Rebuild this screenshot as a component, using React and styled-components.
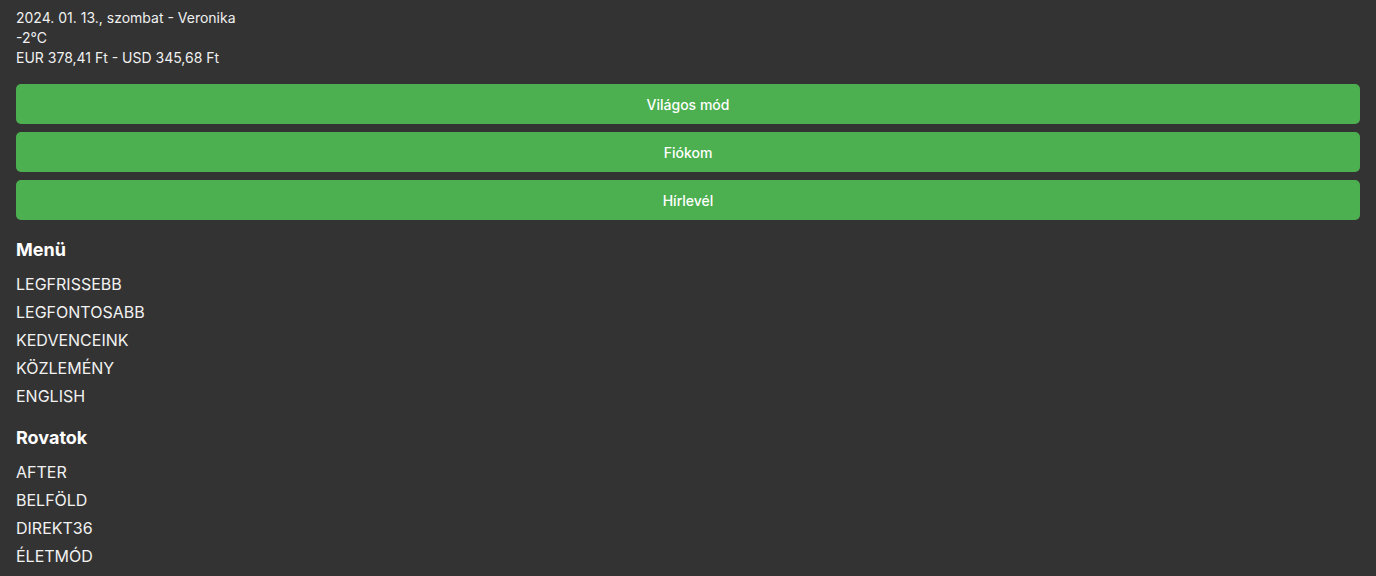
import styled, { createGlobalStyle } from "styled-components";

const GlobalStyle = createGlobalStyle`
  html, body {
    margin: 0;
    padding: 0;
    background: #333333;
  }
  body {
    font-family: Inter, "Noto Sans", sans-serif;
    color: #f2f2f2;
  }
`;

const Page = styled.div`
  padding: 8px 16px;
  background: #333333;
  min-height: 576px;
  box-sizing: border-box;
`;

const Info = styled.div`
  font-size: 14px;
  line-height: 20px;
  color: #f0f0f0;
`;

const ButtonList = styled.div`
  display: flex;
  flex-direction: column;
  gap: 8px;
  margin-top: 16px;
`;

const GreenButton = styled.button`
  height: 40px;
  width: 100%;
  border: none;
  border-radius: 5px;
  background: #4caf50;
  color: #ffffff;
  font-family: Inter, "Noto Sans", sans-serif;
  font-size: 14px;
  font-weight: 500;
  cursor: pointer;
`;

const Section = styled.div`
  margin-top: ${(p) => p.$top}px;
`;

const Heading = styled.h3`
  margin: 0 0 8px;
  font-size: 18px;
  line-height: 24px;
  font-weight: 700;
  color: #ffffff;
`;

const LinkList = styled.ul`
  list-style: none;
  margin: 0;
  padding: 0;
`;

const LinkItem = styled.li`
  font-size: 16px;
  line-height: 28px;
  color: #f2f2f2;
`;

const menu = ["LEGFRISSEBB", "LEGFONTOSABB", "KEDVENCEINK", "KÖZLEMÉNY", "ENGLISH"];
const rovatok = ["AFTER", "BELFÖLD", "DIREKT36", "ÉLETMÓD"];

export default function App() {
  return (
    <Page>
      <GlobalStyle />
      <Info>
        <div>2024. 01. 13., szombat - Veronika</div>
        <div>-2°C</div>
        <div>EUR 378,41 Ft - USD 345,68 Ft</div>
      </Info>
      <ButtonList>
        <GreenButton>Világos mód</GreenButton>
        <GreenButton>Fiókom</GreenButton>
        <GreenButton>Hírlevél</GreenButton>
      </ButtonList>
      <Section $top={18}>
        <Heading>Menü</Heading>
        <LinkList>
          {menu.map((m) => (
            <LinkItem key={m}>{m}</LinkItem>
          ))}
        </LinkList>
      </Section>
      <Section $top={16}>
        <Heading>Rovatok</Heading>
        <LinkList>
          {rovatok.map((m) => (
            <LinkItem key={m}>{m}</LinkItem>
          ))}
        </LinkList>
      </Section>
    </Page>
  );
}
